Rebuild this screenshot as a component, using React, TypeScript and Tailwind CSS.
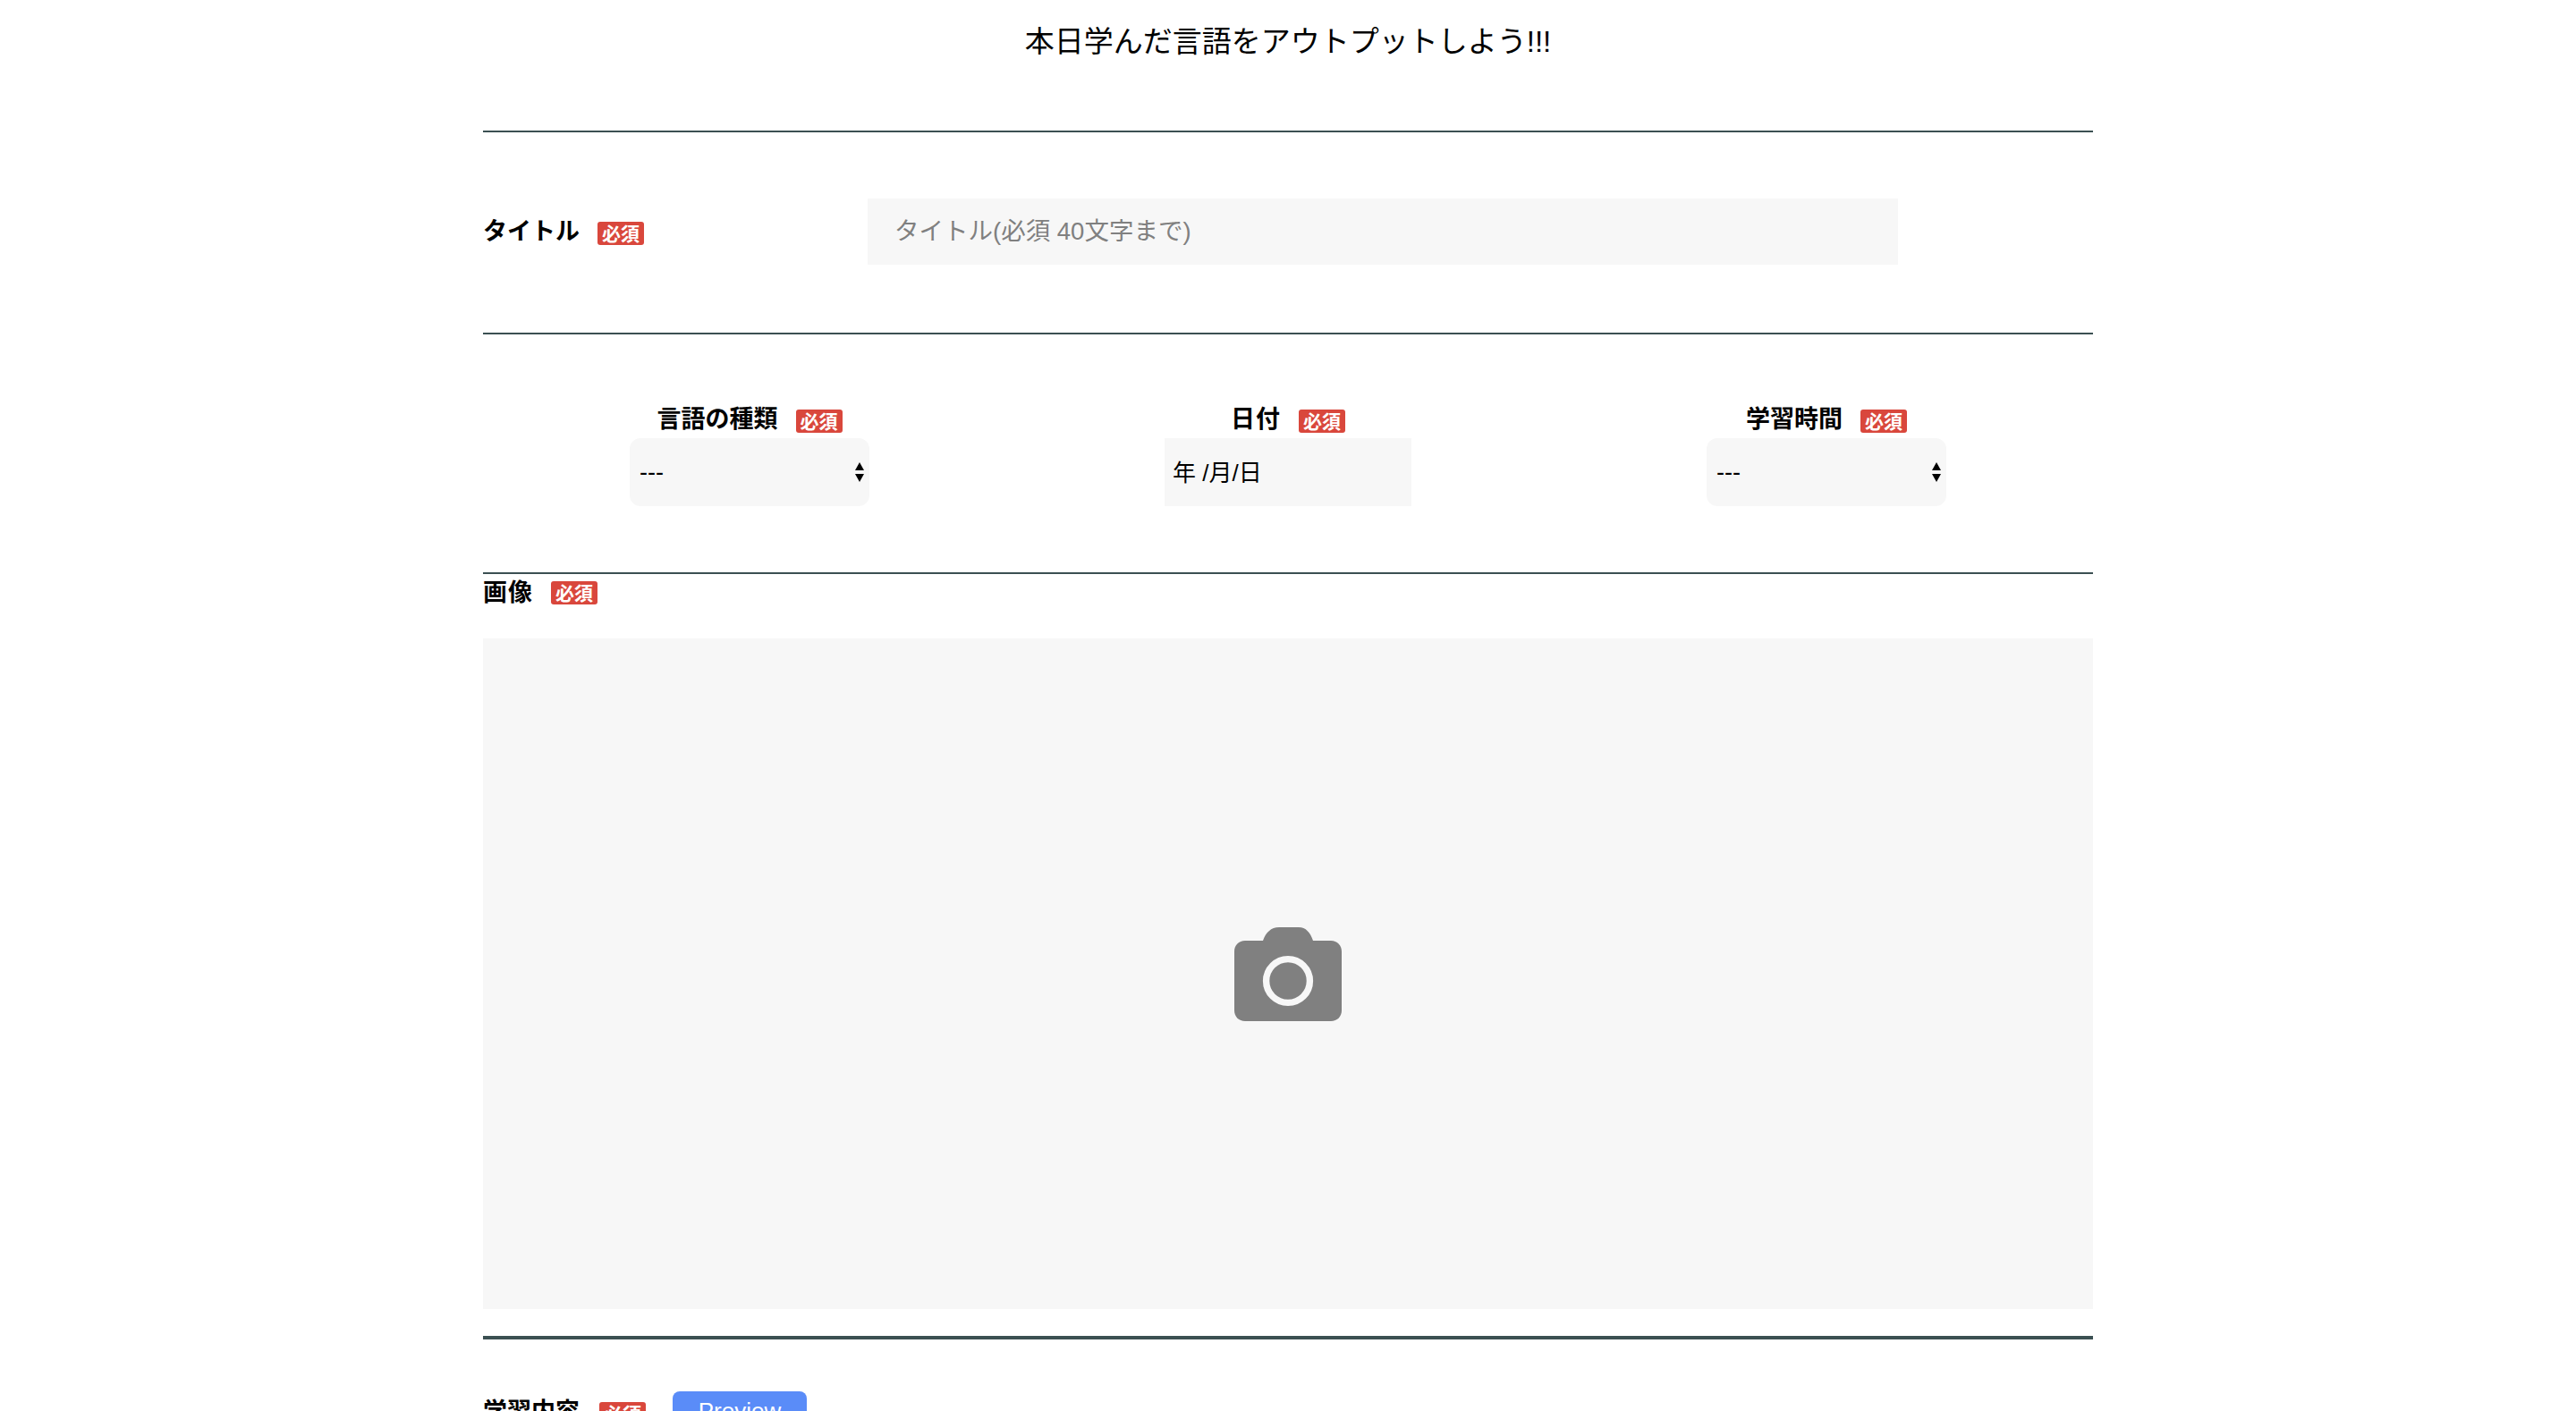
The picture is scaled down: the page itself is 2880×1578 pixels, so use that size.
import React from "react";

const FONT = "font-['Liberation_Sans','Noto_Sans_CJK_JP',sans-serif]";

function Badge() {
  return (
    <span className="inline-flex h-[26px] w-[52px] items-center justify-center rounded-[3px] bg-[#d9473c] text-[21px] font-bold leading-none text-white">
      必須
    </span>
  );
}

function FieldLabel({
  text,
  short,
  flat,
  wide,
}: {
  text: string;
  short?: boolean;
  flat?: boolean;
  wide?: boolean;
}) {
  return (
    <div className={wide ? "flex items-center gap-[22px]" : "flex items-center gap-[20px]"}>
      <span
        className={`text-[27px] font-bold text-black ${flat ? "leading-[38px]" : "pb-[4px] leading-[34px]"} ${
          short ? "tracking-[1px]" : ""
        }`}
      >
        {text}
      </span>
      <Badge />
    </div>
  );
}

function Rule({ thick }: { thick?: boolean }) {
  return <div className={thick ? "h-[4px] bg-[#3b5052]" : "h-[2px] bg-[#3b5052]"} />;
}

function SelectBox() {
  return (
    <div className="relative h-[76px] w-[268px]">
      <select className="h-full w-full appearance-none rounded-[12px] bg-[#f7f7f7] pl-[11px] text-[27px] font-medium text-black outline-none">
        <option>---</option>
      </select>
      <svg
        className="pointer-events-none absolute right-[5px] top-[26px]"
        width="12"
        height="24"
        viewBox="0 0 12 24"
        aria-hidden="true"
      >
        <path d="M6 1 L11 10 L1 10 Z M1 14 L11 14 L6 23 Z" fill="#000" />
      </svg>
    </div>
  );
}

function CameraIcon() {
  return (
    <svg width="120" height="105" viewBox="0 0 120 105" aria-hidden="true">
      <path
        d="M12 15 H32 C35 6 41 0 50 0 H72 C80 0 85 6 88 15 H108 C115 15 120 20 120 27 V93 C120 100 115 105 108 105 H12 C5 105 0 100 0 93 V27 C0 20 5 15 12 15 Z"
        fill="#808080"
      />
      <circle cx="60" cy="60" r="24.4" fill="none" stroke="#f7f7f7" strokeWidth="7.4" />
    </svg>
  );
}

export default function App() {
  return (
    <div className={`h-[1578px] overflow-hidden bg-white ${FONT}`}>
      <div className="mx-auto w-[1800px]">
        <h1 className="pb-[74px] pt-[22px] text-center text-[33px] font-normal leading-[50px] text-black">
          本日学んだ言語をアウトプットしよう!!!
        </h1>
        <Rule />

        <div className="flex items-center pb-[76px] pt-[74px]">
          <div className="w-[430px] pt-[4px]">
            <FieldLabel text="タイトル" />
          </div>
          <input
            className="h-[74px] w-[1152px] bg-[#f7f7f7] pl-[30px] text-[27.5px] outline-none placeholder:text-[#808080]"
            placeholder="タイトル(必須 40文字まで)"
          />
        </div>
        <Rule />

        <div className="flex justify-center gap-[330px] pb-[74px] pt-[78px]">
          <div className="flex flex-col items-center">
            <FieldLabel text="言語の種類" />
            <SelectBox />
          </div>
          <div className="flex flex-col items-center">
            <FieldLabel text="日付" short />
            <div className="flex h-[76px] w-[276px] items-center whitespace-pre bg-[#f7f7f7] pl-[9px] pt-[2px] text-[26px] text-black">
              年 /月/日
            </div>
          </div>
          <div className="flex flex-col items-center">
            <FieldLabel text="学習時間" />
            <SelectBox />
          </div>
        </div>
        <Rule />

        <div className="pt-[2px]">
          <FieldLabel text="画像" short flat />
        </div>
        <div className="mt-[32px] flex h-[750px] items-center justify-center bg-[#f7f7f7]">
          <CameraIcon />
        </div>
        <div className="mt-[30px]">
          <Rule thick />
        </div>

        <div className="flex items-start gap-[30px] pt-[58px]">
          <div className="pt-[6px]">
            <FieldLabel text="学習内容" wide />
          </div>
          <button className="h-[44px] w-[150px] rounded-[8px] bg-[#5a8cf8] text-[26px] text-white">
            Preview
          </button>
        </div>
      </div>
    </div>
  );
}
